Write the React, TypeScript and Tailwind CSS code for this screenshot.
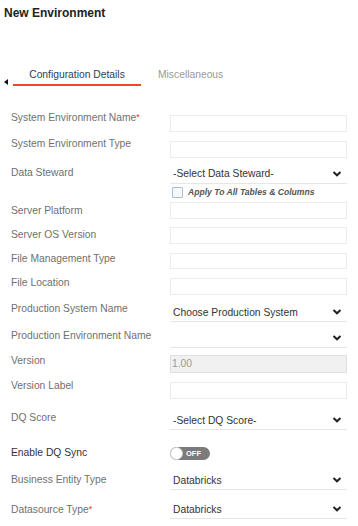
function Chevron() {
    return (
        <svg width="10" height="7" viewBox="0 0 10 7" className="absolute right-[5px] top-1/2 -translate-y-1/2">
            <polyline points="1.5,1.5 5,4.8 8.5,1.5" fill="none" stroke="#222" strokeWidth="2" />
        </svg>
    )
}

function Req() {
    return <span className="text-[#e3342f] text-[9px] align-top relative -top-[1px]">*</span>
}

interface RowProps {
    label: React.ReactNode
    h: string
    lp: string
    fp: string
    dark?: boolean
    children?: React.ReactNode
}

function Row({ label, h, lp, fp, dark, children }: RowProps) {
    return (
        <div className={`flex pl-[11px] ${h}`}>
            <div className={`w-[159px] leading-[14px] ${lp} ${dark ? 'text-[#333]' : 'text-[#707070]'}`}>{label}</div>
            <div className={`w-[177px] ${fp}`}>{children}</div>
        </div>
    )
}

function TextInput({ h = 'h-[17px]' }: { h?: string }) {
    return <div className={`border border-[#ececec] bg-white ${h}`} />
}

function Select({ value, h = 'h-[19px]' }: { value?: string, h?: string }) {
    return (
        <div className={`relative flex items-center border-b border-[#e6e6e6] pl-[3px] text-[#333] ${h}`}>
            <span className="leading-[12px] pt-[1px]">{value}</span>
            <Chevron />
        </div>
    )
}

export default function App() {
    return (
        <div className="w-[358px] h-[526px] bg-white text-[10.3px] overflow-hidden" style={{ fontFamily: '"Liberation Sans", Arial, sans-serif' }}>
            <div className="pt-[5px] pl-[4px] text-[12px] leading-[16px] font-bold text-[#222]">New Environment</div>

            <div className="mt-[47px] h-[42px] relative">
                <div className="absolute left-[4px] top-[11px] w-0 h-0 border-y-[3px] border-y-transparent border-r-[4px] border-r-[#111]" />
                <div className="flex items-start">
                    <div className="ml-[13px] w-[128px] flex flex-col items-center">
                        <span className="leading-[14px] text-[#2f3d55] text-[10.3px]">Configuration Details</span>
                        <div className="mt-[2px] h-[2px] w-full bg-[#f2461f]" />
                    </div>
                    <span className="ml-[17px] leading-[14px] text-[#9a9a9a]">Miscellaneous</span>
                </div>
            </div>

            <Row label={<>System Environment Name<Req /></>} h="h-[26px]" lp="pt-[1px]" fp="pt-[5px]"><TextInput /></Row>
            <Row label="System Environment Type" h="h-[26px]" lp="pt-[1px]" fp="pt-[5px]"><TextInput /></Row>
            <Row label="Data Steward" h="h-[37px]" lp="pt-[4px]" fp="pt-[2px]">
                <Select value="-Select Data Steward-" h="h-[20px]" />
                <div className="mt-[3px] flex items-center pl-[2px]">
                    <div className="w-[11px] h-[11px] border border-[#a9bdd3] bg-[#f5f7fa] rounded-[1px]" />
                    <span className="ml-[5px] italic font-bold text-[8.6px] leading-[11px] text-[#555]">Apply To All Tables &amp; Columns</span>
                </div>
            </Row>
            <Row label="Server Platform" h="h-[25px]" lp="pt-[5px]" fp="pt-[3px]"><TextInput /></Row>
            <Row label="Server OS Version" h="h-[25px]" lp="pt-[4px]" fp="pt-[3px]"><TextInput /></Row>
            <Row label="File Management Type" h="h-[25px]" lp="pt-[3px]" fp="pt-[4px]"><TextInput h="h-[16px]" /></Row>
            <Row label="File Location" h="h-[25px]" lp="pt-[2px]" fp="pt-[4px]"><TextInput /></Row>
            <Row label="Production System Name" h="h-[24px]" lp="pt-[3px]" fp="pt-[4px]"><Select value="Choose Production System" /></Row>
            <Row label="Production Environment Name" h="h-[26px]" lp="pt-[6px]" fp="pt-[5px]"><Select h="h-[20px]" /></Row>
            <Row label="Version" h="h-[25px]" lp="pt-[5px]" fp="pt-[6px]">
                <div className="h-[18px] border border-[#e0e0e0] bg-[#f1f1f1] flex items-center pl-[1px] text-[#9a9a9a]">1.00</div>
            </Row>
            <Row label="Version Label" h="h-[28px]" lp="pt-[5px]" fp="pt-[8px]"><TextInput /></Row>
            <Row label="DQ Score" h="h-[28px]" lp="pt-[9px]" fp="pt-[9px]"><Select value="-Select DQ Score-" /></Row>
            <Row label="Enable DQ Sync" h="h-[36px]" lp="pt-[16px]" fp="pt-[17px]" dark>
                <div className="relative w-[40px] h-[13px] rounded-full bg-[#7b7b7b] flex items-center">
                    <div className="absolute left-0 top-0 w-[13px] h-[13px] rounded-full bg-white border border-[#d0d0d0]" />
                    <span className="ml-[16px] text-[7.5px] font-bold text-white leading-[13px]">OFF</span>
                </div>
            </Row>
            <Row label="Business Entity Type" h="h-[24px]" lp="pt-[7px]" fp="pt-[5px]"><Select value="Databricks" /></Row>
            <Row label={<>Datasource Type<Req /></>} h="h-[30px]" lp="pt-[13px]" fp="pt-[10px]"><Select value="Databricks" /></Row>
        </div>
    )
}
